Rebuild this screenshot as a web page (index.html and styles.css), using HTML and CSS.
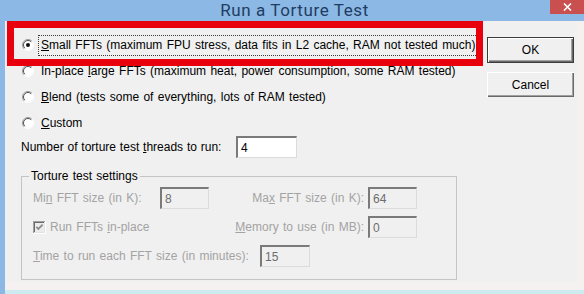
FILE: index.html
```html
<!DOCTYPE html>
<html lang="en">
<head>
  <meta charset="UTF-8">
  <title>Run a Torture Test</title>
  <link rel="stylesheet" href="styles.css">
</head>
<body>
  <div class="window">
    <div class="titlebar">
      <span></span>
      <span class="title">Run a Torture Test</span>
      <span class="close">
        <svg width="9" height="8" viewBox="0 0 9 8"><path d="M1 0.5 L8 7.5 M8 0.5 L1 7.5" stroke="#fff" stroke-width="1.6"/></svg>
      </span>
    </div>

    <div class="client">
      <div class="dialog">
        <div class="main">
          <label class="opt">
            <svg class="radio" width="12" height="12" viewBox="0 0 12 12">
              <circle cx="6" cy="6" r="5" fill="#fff"/>
              <path d="M2.1 9.9 A5.5 5.5 0 0 1 9.9 2.1" fill="none" stroke="#9a9a9a"/>
              <path d="M9.9 2.1 A5.5 5.5 0 0 1 2.1 9.9" fill="none" stroke="#fff"/>
              <path d="M2.8 9.2 A4.5 4.5 0 0 1 9.2 2.8" fill="none" stroke="#505050"/>
              <circle cx="6" cy="6" r="2" fill="#111"/>
            </svg>
            <span class="opt-text focus"><u>S</u>mall FFTs (maximum FPU stress, data fits in L2 cache, RAM not tested much)</span>
          </label>
          <label class="opt">
            <svg class="radio" width="12" height="12" viewBox="0 0 12 12">
              <circle cx="6" cy="6" r="5" fill="#fff"/>
              <path d="M2.1 9.9 A5.5 5.5 0 0 1 9.9 2.1" fill="none" stroke="#9a9a9a"/>
              <path d="M9.9 2.1 A5.5 5.5 0 0 1 2.1 9.9" fill="none" stroke="#fff"/>
              <path d="M2.8 9.2 A4.5 4.5 0 0 1 9.2 2.8" fill="none" stroke="#505050"/>
            </svg>
            <span class="opt-text">In-place <u>l</u>arge FFTs (maximum heat, power consumption, some RAM tested)</span>
          </label>
          <label class="opt">
            <svg class="radio" width="12" height="12" viewBox="0 0 12 12">
              <circle cx="6" cy="6" r="5" fill="#fff"/>
              <path d="M2.1 9.9 A5.5 5.5 0 0 1 9.9 2.1" fill="none" stroke="#9a9a9a"/>
              <path d="M9.9 2.1 A5.5 5.5 0 0 1 2.1 9.9" fill="none" stroke="#fff"/>
              <path d="M2.8 9.2 A4.5 4.5 0 0 1 9.2 2.8" fill="none" stroke="#505050"/>
            </svg>
            <span class="opt-text"><u>B</u>lend (tests some of everything, lots of RAM tested)</span>
          </label>
          <label class="opt">
            <svg class="radio" width="12" height="12" viewBox="0 0 12 12">
              <circle cx="6" cy="6" r="5" fill="#fff"/>
              <path d="M2.1 9.9 A5.5 5.5 0 0 1 9.9 2.1" fill="none" stroke="#9a9a9a"/>
              <path d="M9.9 2.1 A5.5 5.5 0 0 1 2.1 9.9" fill="none" stroke="#fff"/>
              <path d="M2.8 9.2 A4.5 4.5 0 0 1 9.2 2.8" fill="none" stroke="#505050"/>
            </svg>
            <span class="opt-text"><u>C</u>ustom</span>
          </label>

          <div class="threads">
            <span class="threads-label">Number of torture test <u>t</u>hreads to run:</span>
            <input class="edit edit-threads" type="text" value="4">
          </div>

          <fieldset class="group">
            <legend>Torture test settings</legend>
            <div class="group-rows">
              <div class="group-row">
                <span class="lbl lbl-min">Mi<u>n</u> FFT size (in K):</span>
                <input class="edit edit-small" type="text" value="8" disabled>
                <span class="lbl lbl-right">Ma<u>x</u> FFT size (in K):</span>
                <input class="edit edit-small" type="text" value="64" disabled>
              </div>
              <div class="group-row">
                <span class="lbl check-cell">
                  <svg class="check" width="13" height="13" viewBox="0 0 13 13">
                    <rect x="0" y="0" width="13" height="13" fill="#fff"/>
                    <rect x="0" y="0" width="12" height="12" fill="#a0a0a0"/>
                    <rect x="1" y="1" width="11" height="11" fill="#e3e3e3"/>
                    <rect x="1" y="1" width="10" height="10" fill="#6a6a6a"/>
                    <rect x="2" y="2" width="9" height="9" fill="#ececec"/>
                    <path d="M3.3 5.8 L5.4 7.9 L9.6 3.7" fill="none" stroke="#8c8c8c" stroke-width="1.8"/>
                  </svg>
                  <span>Run FFTs <u>i</u>n-place</span>
                </span>
                <span class="lbl lbl-right"><u>M</u>emory to use (in MB):</span>
                <input class="edit edit-small" type="text" value="0" disabled>
              </div>
              <div class="group-row">
                <span class="lbl lbl-time"><u>T</u>ime to run each FFT size (in minutes):</span>
                <input class="edit edit-time" type="text" value="15" disabled>
              </div>
            </div>
          </fieldset>
        </div>

        <div class="buttons">
          <button class="btn btn-default">OK</button>
          <button class="btn">Cancel</button>
        </div>

        <div class="highlight"></div>
      </div>
    </div>
  </div>
</body>
</html>
```

FILE: styles.css
```css
body {
  margin: 0;
  font-family: "Liberation Sans", Arial, sans-serif;
  font-size: 12px;
  word-spacing: 1px;
  color: #000;
}

.window {
  width: 584px;
  height: 294px;
  background-color: #8cb8e6;
  overflow: hidden;
}

.titlebar {
  height: 21px;
  display: grid;
  grid-template-columns: 1fr auto 1fr;
  align-items: start;
  padding-left: 5px;
}

.title {
  font-family: Roboto, sans-serif;
  font-size: 17px;
  line-height: 20px;
  letter-spacing: 0.6px;
  word-spacing: 0;
  color: #1f3d60;
}

.close {
  justify-self: end;
  width: 34px;
  height: 14px;
  background-color: #c9504f;
  display: flex;
  justify-content: center;
  align-items: center;
}

.client {
  margin-left: 5px;
  height: 273px;
  box-sizing: border-box;
  border-bottom: 4px solid #cdebee;
}

.dialog {
  position: relative;
  height: 100%;
  box-sizing: border-box;
  background-color: #f0f0f0;
  border-right: 7px solid #f5f1f1;
  border-bottom: 8px solid #f5f1f1;
  display: flex;
  padding: 11px 0 0 16px;
}

.main {
  width: 466px;
}

/* radio rows */
.opt {
  height: 26px;
  display: flex;
  align-items: center;
  padding-left: 1px;
}

.radio {
  margin-right: 4px;
  flex: none;
}

.opt-text {
  line-height: 15px;
  padding: 2px;
  border: 1px solid transparent;
  white-space: nowrap;
}

.opt-text.focus {
  border: 1px dotted #3a3a3a;
}

.threads {
  height: 22px;
  display: flex;
  align-items: center;
}

.threads-label {
  width: 215px;
  word-spacing: 0.5px;
}

/* edit boxes */
.edit {
  box-sizing: border-box;
  height: 22px;
  margin: 0;
  padding: 0 3px;
  font: inherit;
  color: #000;
  background-color: #fff;
  border-style: solid;
  border-width: 2px 1px 1px 2px;
  border-color: #7a7a7a #dcdcdc #dcdcdc #7a7a7a;
  outline: none;
}

.edit:disabled {
  background-color: #f0f0f0;
  color: #6d6d6d;
}

.edit-threads {
  width: 61px;
}

.edit-small {
  width: 49px;
}

.edit-time {
  width: 50px;
}

/* group box */
.group {
  width: 436px;
  box-sizing: border-box;
  margin: 11px 0 0 0;
  padding: 3px 0 12px 11px;
  border: 1px solid #c4c4c4;
}

.group legend {
  line-height: 15px;
  padding: 0 2px;
  margin-left: -4px;
}

.group-rows {
  display: grid;
  row-gap: 7px;
}

.group-row {
  height: 22px;
  display: flex;
  align-items: center;
}

.lbl {
  color: #a3a3a3;
  white-space: nowrap;
}

.lbl-min {
  width: 127px;
}

.lbl-right {
  width: 159px;
  box-sizing: border-box;
  padding-right: 4px;
  text-align: right;
}

.check-cell {
  width: 176px;
  display: flex;
  align-items: center;
}

.check {
  margin-right: 4px;
}

.lbl-time {
  width: 227px;
}

/* buttons */
.buttons {
  width: 87px;
  margin-top: 5px;
  display: flex;
  flex-direction: column;
  gap: 9px;
}

.btn {
  height: 25px;
  padding: 0;
  font: inherit;
  color: #000;
  background-color: #f0f0f0;
  border: 0;
  box-shadow: inset 1px 1px 0 #fff, inset -1px -1px 0 #696969, inset -2px -2px 0 #a0a0a0;
}

.btn-default {
  height: 26px;
  border: 1px solid #3c3c3c;
}

/* red annotation drawn over the first option */
.highlight {
  position: absolute;
  left: 2px;
  top: 0;
  width: 476px;
  height: 45px;
  box-sizing: border-box;
  border: 7px solid #e8000c;
}
```
